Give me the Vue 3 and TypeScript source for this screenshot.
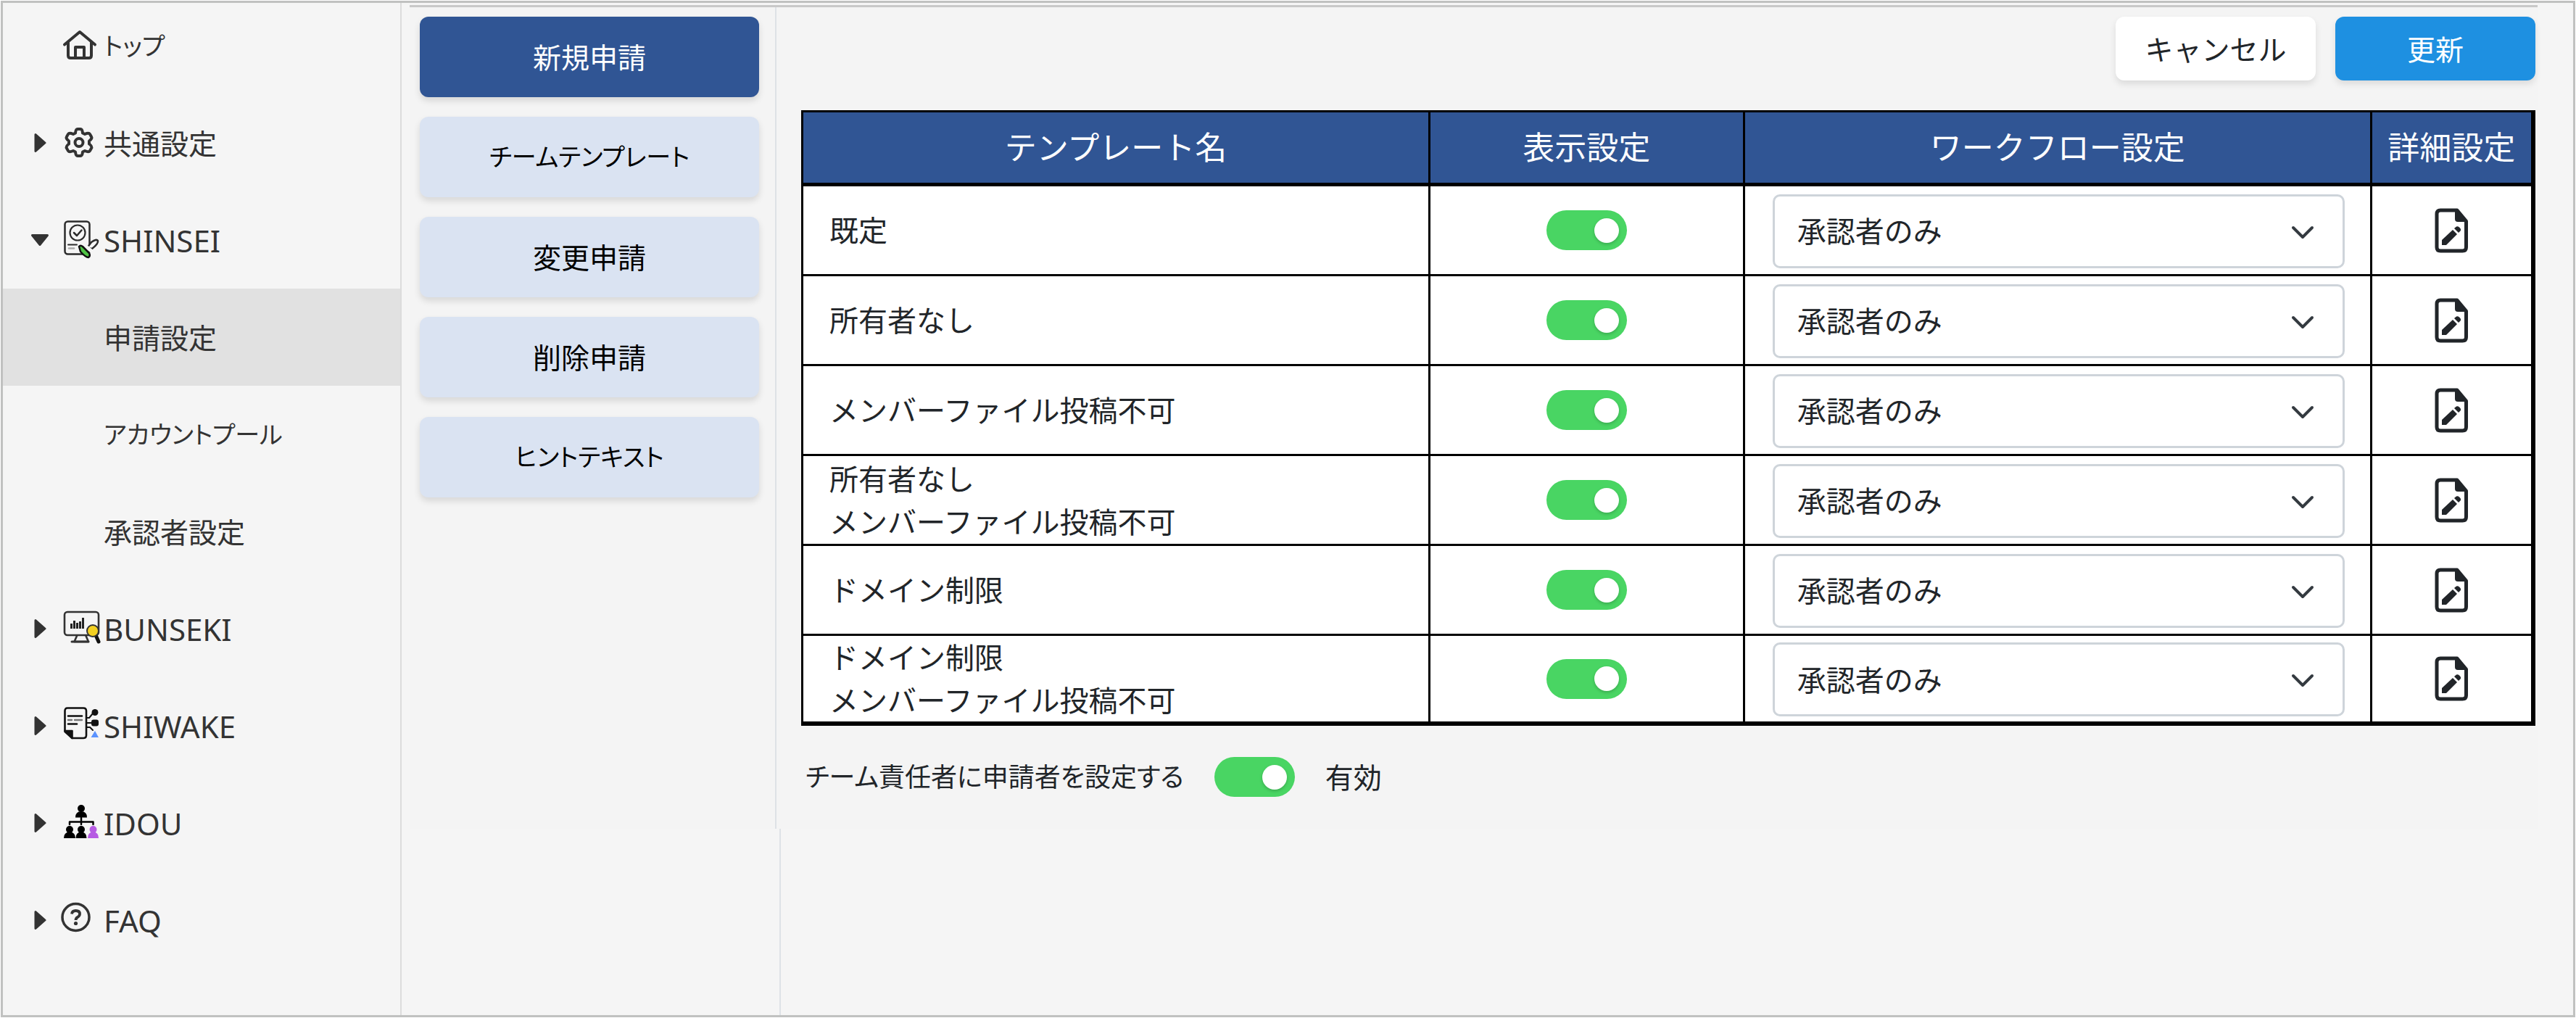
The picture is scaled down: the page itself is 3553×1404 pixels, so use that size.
<script setup lang="ts">
import { ref } from 'vue'

type IconName = 'home' | 'gear' | 'shinsei' | 'bunseki' | 'shiwake' | 'idou' | 'faq'

interface NavItem {
  label: string
  script?: 'kana' | 'latin'
  icon?: IconName
  caret?: 'right' | 'down'
  active?: boolean
}

interface Tab {
  label: string
  kana?: boolean
}

interface TemplateRow {
  lines: string[]
  visible: boolean
  workflow: string
}

const navItems: NavItem[] = [
  { label: 'トップ', script: 'kana', icon: 'home' },
  { label: '共通設定', icon: 'gear', caret: 'right' },
  { label: 'SHINSEI', script: 'latin', icon: 'shinsei', caret: 'down' },
  { label: '申請設定', active: true },
  { label: 'アカウントプール', script: 'kana' },
  { label: '承認者設定' },
  { label: 'BUNSEKI', script: 'latin', icon: 'bunseki', caret: 'right' },
  { label: 'SHIWAKE', script: 'latin', icon: 'shiwake', caret: 'right' },
  { label: 'IDOU', script: 'latin', icon: 'idou', caret: 'right' },
  { label: 'FAQ', script: 'latin', icon: 'faq', caret: 'right' },
]

const tabs: Tab[] = [
  { label: '新規申請' },
  { label: 'チームテンプレート', kana: true },
  { label: '変更申請' },
  { label: '削除申請' },
  { label: 'ヒントテキスト', kana: true },
]
const currentTab = ref('新規申請')

const workflow = '承認者のみ'
const rows = ref<TemplateRow[]>([
  { lines: ['既定'], visible: true, workflow },
  { lines: ['所有者なし'], visible: true, workflow },
  { lines: ['メンバーファイル投稿不可'], visible: true, workflow },
  { lines: ['所有者なし', 'メンバーファイル投稿不可'], visible: true, workflow },
  { lines: ['ドメイン制限'], visible: true, workflow },
  { lines: ['ドメイン制限', 'メンバーファイル投稿不可'], visible: true, workflow },
])

const ownerIsApplicant = ref(true)
</script>

<template>
  <div class="app">
    <nav class="sidebar">
      <a
        v-for="item in navItems"
        :key="item.label"
        href="#"
        class="nav-item"
        :class="[item.script, { active: item.active }]"
      >
        <span class="caret">
          <svg v-if="item.caret === 'right'" width="17" height="28" viewBox="0 0 17 28">
            <path d="M2 2.500L15 14L2 25.500Z" fill="#333" stroke="#333" stroke-width="3" stroke-linejoin="round" />
          </svg>
          <svg v-else-if="item.caret === 'down'" width="26" height="18" viewBox="0 0 26 18">
            <path d="M2.500 2.500H23.500L13 15.500Z" fill="#333" stroke="#333" stroke-width="3" stroke-linejoin="round" />
          </svg>
        </span>
        <span class="icon">
          <svg v-if="item.icon" width="56" height="56" viewBox="0 0 56 56" fill="none" stroke-linecap="round" stroke-linejoin="round">
            <g v-if="item.icon === 'home'" stroke="#333" stroke-width="4">
              <path d="M5 26.500L26 9L47 26.500" />
              <path d="M10 23V41.500Q10 45 13.500 45H38.500Q42 45 42 41.500V23" />
              <path d="M20 45V30H32V45" />
            </g>
            <g v-else-if="item.icon === 'gear'" stroke="#333" stroke-width="4">
              <path d="M20 14.500Q20.500 9 23 9H27Q29.500 9 30 14.500L33 16Q38.500 13.500 40 16L42 19.500Q43.500 22 39 25.500V29.500Q43.500 33 42 35.500L40 39Q38.500 41.500 33 39L30 40.500Q29.500 46 27 46H23Q20.500 46 20 40.500L17 39Q11.500 41.500 10 39L8 35.500Q6.500 33 11 29.500V25.500Q6.500 22 8 19.500L10 16Q11.500 13.500 17 16Z" />
              <circle cx="25" cy="27.500" r="5.500" />
            </g>
            <g v-else-if="item.icon === 'shinsei'" stroke="#2b2b2b" stroke-width="2.500">
              <rect x="5.500" y="2.500" width="34" height="45" rx="4" />
              <circle cx="23" cy="18" r="10.500" stroke-width="2.200" />
              <path d="M18 18L22 22L28.500 14.500" />
              <path d="M10 34.500H22" stroke-width="2" />
              <path d="M11 39.500H18" stroke="#aaa" />
              <path d="M36 39L42 31Q49 26 51 29Q52 33 43 40Z" fill="#f5f5f5" />
              <path d="M31 34L43 44" stroke="#f5f5f5" stroke-width="5" />
              <path d="M25 37Q27 34.500 30 37L39 46Q41 50 38 52Q34 52 27 44Z" fill="#4fc445" stroke="#111" />
            </g>
            <g v-else-if="item.icon === 'bunseki'" stroke="#333" stroke-width="2.600">
              <rect x="5" y="5" width="47" height="32" rx="4" />
              <path d="M22 38L18.500 46H38L34.500 38" />
              <path d="M15 46H38" stroke-width="3" />
              <path d="M14.500 21V28M18.500 17V28M22.500 20V28M26.500 18V28M30.500 13V28" stroke="#222" stroke-width="3" stroke-linecap="butt" />
              <path d="M48 37L52 46" stroke="#111" stroke-width="5" />
              <circle cx="44" cy="31" r="8" fill="#f3d021" stroke="#333" stroke-width="2" />
            </g>
            <g v-else-if="item.icon === 'shiwake'" stroke="#111" stroke-width="2.600">
              <path d="M9 3.500H31Q35 3.500 35 7.500V41Q35 45 31 45H15.500L5.500 36V7.500Q5.500 3.500 9 3.500Z" />
              <path d="M5.500 35H15.500V45Z" fill="#111" />
              <path d="M10 14.500H29" />
              <path d="M10 20H15M19 20H29" stroke="#777" stroke-width="2.400" />
              <path d="M10 25.500H22" />
              <path d="M35 17H39L44 11M35 24H46M35 30H40L44 34" stroke-width="2" />
              <circle cx="47" cy="9.500" r="4.500" fill="#111" stroke="none" />
              <rect x="42" y="19.500" width="10" height="9" rx="3" fill="#111" stroke="none" />
              <path d="M47 35L52 44H41.500Z" fill="#5b93ff" stroke="none" />
            </g>
            <g v-else-if="item.icon === 'idou'" fill="#000">
              <circle cx="28" cy="8" r="5" />
              <path d="M20 20.500Q20 12 28 12Q36 12 36 20.500Z" />
              <path d="M28 21V30M12 30V26.500H44.500V30" fill="none" stroke="#000" stroke-width="2.500" />
              <circle cx="12" cy="37" r="5" />
              <path d="M4 49Q4 40.500 12 40.500Q20 40.500 20 49Z" />
              <circle cx="28" cy="37" r="5" />
              <path d="M20.500 49Q20.500 40.500 28 40.500Q35.500 40.500 35.500 49Z" />
              <g fill="#b65be3">
                <circle cx="44.500" cy="37" r="5" />
                <path d="M37 49Q37 40.500 44.500 40.500Q52 40.500 52 49Z" />
              </g>
            </g>
            <g v-else-if="item.icon === 'faq'" stroke="#333">
              <circle cx="20.500" cy="24" r="18.500" stroke-width="3.500" />
              <path d="M15 19.500Q15.500 15 20.500 15Q26 15 26 19.500Q26 22 23 24Q20.500 25.500 20.500 28" stroke-width="3.800" stroke-linecap="butt" />
              <circle cx="20.500" cy="32.500" r="2.600" fill="#333" stroke="none" />
            </g>
          </svg>
        </span>
        <span>{{ item.label }}</span>
      </a>
    </nav>

    <div class="content">
      <div class="workspace">
        <div class="tabs">
          <button
            v-for="tab in tabs"
            :key="tab.label"
            type="button"
            class="tab"
            :class="{ current: tab.label === currentTab, kana: tab.kana }"
            @click="currentTab = tab.label"
          >
            {{ tab.label }}
          </button>
        </div>

        <main class="main">
          <div class="actions">
            <button type="button" class="action">キャンセル</button>
            <button type="button" class="action primary">更新</button>
          </div>

          <table class="templates">
            <colgroup>
              <col class="col-wide" />
              <col class="col-mid" />
              <col class="col-wide" />
              <col />
            </colgroup>
            <thead>
              <tr>
                <th scope="col">テンプレート名</th>
                <th scope="col">表示設定</th>
                <th scope="col">ワークフロー設定</th>
                <th scope="col">詳細設定</th>
              </tr>
            </thead>
            <tbody>
              <tr v-for="(row, index) in rows" :key="index">
                <td class="name">
                  <div v-for="line in row.lines" :key="line">{{ line }}</div>
                </td>
                <td>
                  <input
                    v-model="row.visible"
                    type="checkbox"
                    class="toggle"
                    role="switch"
                    :aria-label="row.lines.join(' ') + ' 表示設定'"
                  />
                </td>
                <td class="flow">
                  <div class="select-wrap">
                    <select v-model="row.workflow" :aria-label="row.lines.join(' ') + ' ワークフロー設定'">
                      <option>承認者のみ</option>
                    </select>
                    <svg class="chevron" width="32" height="20" viewBox="0 0 32 20">
                      <path d="M3 3L16 16L29 3" fill="none" stroke="#343a40" stroke-width="4" stroke-linecap="round" stroke-linejoin="round" />
                    </svg>
                  </div>
                </td>
                <td>
                  <button type="button" class="detail" :aria-label="row.lines.join(' ') + ' 詳細設定'">
                    <svg width="46" height="62" viewBox="0 0 46 62">
                      <path d="M8 3H31L43.500 18V54Q43.500 59 38.500 59H8Q3 59 3 54V8Q3 3 8 3Z" fill="none" stroke="#212529" stroke-width="5" stroke-linejoin="round" />
                      <path d="M28 3H32L44 17V19H32Q28 19 28 15Z" fill="#212529" />
                      <path d="M10 51V44L25 30L31 36L16 51Z" fill="#212529" />
                      <path d="M27 28L30 25.500Q32 24.500 34 26.500L35.500 28Q37 30 35.500 31.500L33 34Z" fill="#212529" />
                    </svg>
                  </button>
                </td>
              </tr>
            </tbody>
          </table>

          <div class="owner">
            <label for="owner-toggle">チーム責任者に申請者を設定する</label>
            <input id="owner-toggle" v-model="ownerIsApplicant" type="checkbox" class="toggle" role="switch" />
            <span class="state">{{ ownerIsApplicant ? '有効' : '無効' }}</span>
          </div>
        </main>
      </div>
      <div class="rest"></div>
    </div>
  </div>
</template>

<style>
body {
  margin: 0;
  padding: 1px;
  background: #fff;
}
</style>

<style scoped>
.app {
  box-sizing: border-box;
  display: flex;
  min-height: calc(100vh - 2px);
  border: 3px solid #c0c1c0;
  background: #f5f5f5;
  color: #212529;
  font-family: 'Noto Sans', 'Noto Sans CJK JP', sans-serif;
  font-size: 39px;
  line-height: 59px;
}

button,
select {
  font-family: inherit;
  font-size: inherit;
  line-height: inherit;
}

.sidebar {
  box-sizing: border-box;
  flex: none;
  width: 550px;
  border-right: 2px solid #dcdcdc;
}

.nav-item {
  box-sizing: border-box;
  display: flex;
  align-items: center;
  height: 134px;
  padding-left: 38px;
  color: #333;
  text-decoration: none;
}

.nav-item:first-child {
  height: 126px;
  padding-bottom: 8px;
}

.nav-item.active {
  background: #e1e1e1;
}

.nav-item.latin {
  font-size: 42px;
}

.kana {
  font-feature-settings: 'palt';
  font-size: 34px;
}

.caret {
  display: flex;
  justify-content: center;
  width: 26px;
  margin-right: 16px;
}

.icon {
  display: flex;
  width: 56px;
  height: 56px;
  margin-right: 3px;
}

.content {
  display: flex;
  flex: 1;
  flex-direction: column;
  min-width: 0;
}

.workspace {
  display: flex;
  margin: 3px 49px 0 11px;
  border-top: 3px solid #c8c8c8;
  background: #f4f4f4;
}

.tabs {
  box-sizing: border-box;
  display: flex;
  flex: none;
  flex-direction: column;
  gap: 27px;
  width: 506px;
  padding: 13px 22px 14px 14px;
  border-right: 2px solid #dee2e6;
}

.tab {
  height: 111px;
  padding: 0;
  border: 0;
  border-radius: 12px;
  background: #dae3f2;
  box-shadow: 0 5px 10px rgba(0, 0, 0, 0.12);
  color: #000;
}

.tab.current {
  background: #305594;
  color: #fff;
}

.main {
  flex: 1;
  min-width: 0;
  padding: 13px 3px 42px 34px;
}

.actions {
  display: flex;
  justify-content: flex-end;
  gap: 27px;
}

.action {
  width: 276px;
  height: 88px;
  padding: 0;
  border: 0;
  border-radius: 12px;
  background: #fff;
  box-shadow: 0 5px 10px rgba(0, 0, 0, 0.1);
  color: #212529;
}

.action.primary {
  background: #1e90e1;
  color: #fff;
}

.templates {
  width: 100%;
  margin-top: 41px;
  border: solid #000;
  border-width: 3px 6px 6px 3px;
  border-collapse: separate;
  border-spacing: 0;
  background: #fff;
  font-size: 40px;
  table-layout: fixed;
}

.col-wide {
  width: 36.3%;
}

.col-mid {
  width: 18.2%;
}

th,
td {
  box-sizing: border-box;
  padding: 0;
  border: 0 solid #000;
  border-right-width: 3px;
  vertical-align: middle;
}

th {
  height: 102px;
  border-bottom-width: 5px;
  background: #305594;
  color: #fff;
  font-size: 44px;
  font-weight: 400;
  white-space: nowrap;
}

td {
  height: 124px;
  border-bottom-width: 3px;
}

th:last-child,
td:last-child {
  border-right-width: 0;
}

tr:last-child td {
  height: 118px;
  border-bottom-width: 0;
}

.name {
  padding-left: 36px;
}

.flow {
  padding: 2px 35px 0 38px;
}

.select-wrap {
  position: relative;
  display: flex;
}

select {
  width: 100%;
  height: 102px;
  padding: 0 100px 0 31px;
  border: 3px solid #ced4da;
  border-radius: 10px;
  background: #fff;
  color: #212529;
  appearance: none;
}

.chevron {
  position: absolute;
  top: 43px;
  right: 42px;
  pointer-events: none;
}

.toggle {
  display: flex;
  align-items: center;
  justify-content: flex-end;
  box-sizing: border-box;
  width: 111px;
  height: 55px;
  margin: 0;
  padding: 0 11px;
  border-radius: 28px;
  background: #c4c8cc;
  appearance: none;
}

td .toggle {
  margin: 0 auto;
}

.toggle::before {
  width: 34px;
  height: 34px;
  border-radius: 50%;
  background: #fff;
  box-shadow: 0 2px 4px rgba(0, 0, 0, 0.2);
  content: '';
}

.toggle:checked {
  background: #49d563;
}

.toggle:not(:checked) {
  justify-content: flex-start;
}

.detail {
  display: flex;
  margin: 0 auto;
  padding: 0;
  border: 0;
  background: none;
}

.owner {
  display: flex;
  align-items: center;
  gap: 42px;
  margin-top: 41px;
  padding-left: 6px;
  font-feature-settings: 'palt';
  font-size: 36px;
}

.state {
  font-size: 39px;
}

.rest {
  box-sizing: border-box;
  flex: 1;
  width: 523px;
  border-right: 2px solid #dee2e6;
}
</style>
